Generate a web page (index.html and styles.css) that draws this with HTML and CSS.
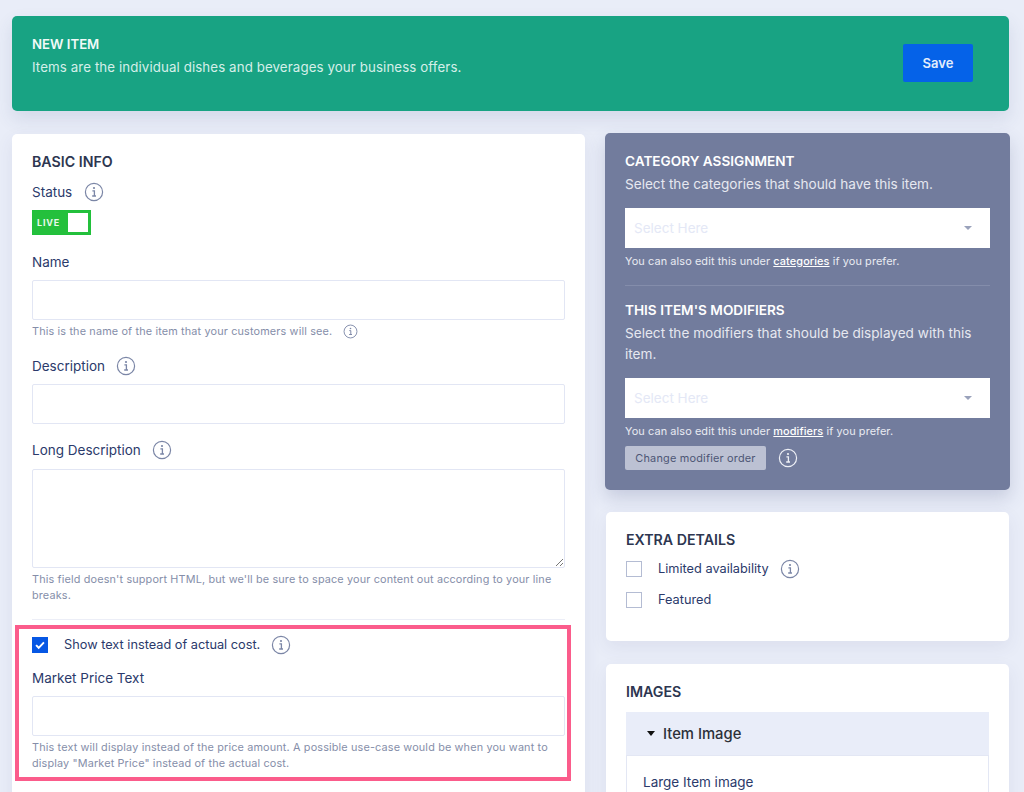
FILE: index.html
```html
<!DOCTYPE html>
<html lang="en">
<head>
<meta charset="utf-8">
<title>New Item</title>
<link rel="stylesheet" href="styles.css">
</head>
<body>
<svg class="sprite" width="0" height="0" aria-hidden="true">
  <symbol id="info" viewBox="0 0 20 20">
    <circle cx="10" cy="10" r="8.6" fill="none" stroke="currentColor" stroke-width="1.2"/>
    <path d="M8.4 8.8h2v5M8.2 14h3.8" fill="none" stroke="currentColor" stroke-width="1.3"/>
    <circle cx="10" cy="6" r="1.1" fill="currentColor"/>
  </symbol>
</svg>
<main class="page">
  <header class="banner">
    <div>
      <h1 class="banner-title">NEW ITEM</h1>
      <p class="banner-text">Items are the individual dishes and beverages your business offers.</p>
    </div>
    <button class="save" type="button">Save</button>
  </header>
  <div class="columns">
    <section class="card left">
      <h2 class="title">BASIC INFO</h2>
      <div class="label-row status-row"><span class="label">Status</span><svg class="info"><use href="#info"/></svg></div>
      <div class="switch"><span class="switch-text">LIVE</span><span class="knob"></span></div>
      <div class="label-row name-row"><span class="label">Name</span></div>
      <div class="input"></div>
      <div class="help help-row">This is the name of the item that your customers will see.<svg class="info small"><use href="#info"/></svg></div>
      <div class="label-row desc-row"><span class="label">Description</span><svg class="info"><use href="#info"/></svg></div>
      <div class="input"></div>
      <div class="label-row long-row"><span class="label">Long Description</span><svg class="info"><use href="#info"/></svg></div>
      <div class="input textarea">
        <svg class="grip" viewBox="0 0 10 10"><path d="M9 2L2 9M9 6L6 9" stroke="#777" fill="none"/></svg>
      </div>
      <p class="help help-long">This field doesn't support HTML, but we'll be sure to space your content out according to your line breaks.</p>
      <hr class="rule">
      <div class="marked">
        <div class="check-row">
          <span class="box checked"><svg viewBox="0 0 16 16"><path d="M3.5 8.2l3 3 6-6.2" fill="none" stroke="#fff" stroke-width="2.2"/></svg></span>
          <span class="label check-label">Show text instead of actual cost.</span>
          <svg class="info"><use href="#info"/></svg>
        </div>
        <div class="label-row price-row"><span class="label">Market Price Text</span></div>
        <div class="input"></div>
        <p class="help help-long">This text will display instead of the price amount. A possible use-case would be when you want to display "Market Price" instead of the actual cost.</p>
        <div class="highlight"></div>
      </div>
    </section>
    <div class="right">
      <section class="card dark">
        <h2 class="title light">CATEGORY ASSIGNMENT</h2>
        <p class="lead">Select the categories that should have this item.</p>
        <div class="select"><span>Select Here</span><i class="caret"></i></div>
        <p class="note">You can also edit this under <a href="#">categories</a> if you prefer.</p>
        <hr class="dark-rule">
        <h2 class="title light">THIS ITEM'S MODIFIERS</h2>
        <p class="lead">Select the modifiers that should be displayed with this item.</p>
        <div class="select"><span>Select Here</span><i class="caret"></i></div>
        <p class="note">You can also edit this under <a href="#">modifiers</a> if you prefer.</p>
        <div class="order-row">
          <button class="order" type="button">Change modifier order</button>
          <svg class="info white"><use href="#info"/></svg>
        </div>
      </section>
      <section class="card extra">
        <h2 class="title">EXTRA DETAILS</h2>
        <div class="check-row"><span class="box"></span><span class="label check-label">Limited availability</span><svg class="info"><use href="#info"/></svg></div>
        <div class="check-row"><span class="box"></span><span class="label check-label">Featured</span></div>
      </section>
      <section class="card images">
        <h2 class="title">IMAGES</h2>
        <div class="acc-head"><i class="acc-caret"></i>Item Image</div>
        <div class="acc-body"><span class="label">Large Item image</span></div>
      </section>
    </div>
  </div>
</main>
</body>
</html>
```
FILE: styles.css
```css
* { box-sizing: border-box; }
html, body { margin: 0; height: 792px; overflow: hidden; }
body {
  background: #e9edf8;
  font-family: Inter, "Liberation Sans", sans-serif;
  color: #2b3a6b;
}
.sprite { position: absolute; }
.page { height: 792px; overflow: hidden; padding: 16px 14px 0 12px; }

.banner {
  height: 95px;
  margin-right: 1px;
  background: #18a383;
  border-radius: 5px;
  box-shadow: 0 8px 18px rgba(60, 70, 120, .12);
  padding: 20px 36px 0 20px;
  display: flex;
  justify-content: space-between;
  align-items: flex-start;
}
.banner-title { margin: 0; font-size: 13.2px; line-height: 16px; font-weight: 600; color: #f2faf8; }
.banner-text { margin: 5px 0 0; font-size: 13.3px; line-height: 20px; color: #d5efe9; letter-spacing: .1px; }
.save {
  width: 70px; height: 38px; margin-top: 8px;
  border: 0; border-radius: 2px;
  background: #0562e8; color: #e3edfc;
  font: 600 13px Inter, "Liberation Sans", sans-serif;
}

.columns { display: flex; align-items: flex-start; gap: 20.5px; margin-top: 23px; }
.card { background: #fff; border-radius: 5px; box-shadow: 0 6px 18px rgba(60, 70, 120, .08); }
.left { width: 572.5px; height: 800px; padding: 20px 20px 0; flex: none; }
.right { width: 405px; flex: none; margin-top: -1px; display: flex; flex-direction: column; }

.title { margin: 0; font-size: 14.2px; line-height: 16px; font-weight: 600; color: #2d3650; }
.title.light { font-size: 13.6px; color: #fff; }
.label { font-size: 13.5px; line-height: 18px; color: #2b3a6b; }
.check-label { font-size: 12.75px; }
.label-row { display: flex; align-items: center; gap: 11px; height: 20px; }
.info { width: 20px; height: 20px; color: #7b86a6; flex: none; }
.info.small { width: 15px; height: 15px; margin-left: 11px; }
.info.white { color: #eef0f6; }
.status-row { margin-top: 12px; gap: 12px; }
.switch {
  width: 59px; height: 25px; margin-top: 8px;
  background: #24c03c; border: 1px solid #20c03a;
  position: relative;
  display: flex; align-items: center;
  padding-left: 4px;
}
.switch-text { font-size: 9px; font-weight: 700; letter-spacing: .8px; color: #e8f9eb; }
.knob { position: absolute; top: 2px; right: 2px; width: 20px; height: 19px; background: #fff; }
.name-row { margin-top: 17px; }
.input { height: 40px; margin-top: 8px; border: 1px solid #e2e6f4; border-radius: 2px; background: #fff; }
.help { font-size: 10.85px; line-height: 16px; color: #858ea9; letter-spacing: .15px; margin: 0; }
.help-row { display: flex; align-items: center; margin-top: 3px; height: 16px; }
.desc-row { margin-top: 17px; }
.long-row { margin-top: 16px; }
.textarea { height: 99px; margin-top: 9px; position: relative; }
.grip { position: absolute; right: 0; bottom: 0; width: 10px; height: 10px; }
.help-long { margin-top: 3px; }
.rule { border: 0; border-top: 1px solid #eceef7; margin: 16px 0 0; }

.marked { position: relative; padding-top: 15px; }
.check-row { display: flex; align-items: center; height: 20px; }
.box {
  width: 16px; height: 16px; flex: none; margin-right: 16px;
  border: 1px solid #b4bcd3; background: #fff;
}
.box.checked { background: #0657e4; border-color: #0657e4; }
.box svg { display: block; width: 14px; height: 14px; }
.check-row .info { margin-left: 11px; }
.price-row { margin-top: 13px; }
.highlight {
  position: absolute;
  left: -17px; top: 5px;
  width: 556px; height: 156px;
  border: 4px solid #fb5c8b;
  pointer-events: none;
}

.dark { background: #727c9d; padding: 20px; height: 357px; box-shadow: 0 8px 18px rgba(60, 70, 120, .2); }
.lead { margin: 5px 0 0; font-size: 13.6px; line-height: 21px; color: #e6e8f0; }
.select {
  height: 40px; margin-top: 13px; background: #fff;
  display: flex; align-items: center; justify-content: space-between;
  padding: 0 18px 0 9px;
  font-size: 13.5px; color: #e4e8f6;
}
.caret { width: 0; height: 0; border: 4px solid transparent; border-top: 4px solid #9aa2bb; border-bottom: 0; }
.note { margin: 5px 0 0; font-size: 10.9px; line-height: 16px; color: #e9ebf2; letter-spacing: .1px; }
.note a { color: #fff; font-weight: 500; }
.dark-rule { border: 0; border-top: 1px solid #848dab; margin: 16px 0 16px; }
.order-row { display: flex; align-items: center; gap: 12px; margin-top: 7px; }
.order {
  width: 141px; height: 24px; border: 0; border-radius: 2px;
  background: #bcc1d3; color: #4d5675;
  font: 10.9px Inter, "Liberation Sans", sans-serif; letter-spacing: .2px;
}

.extra { width: 403px; margin: 22px 0 0 1px; height: 129px; padding: 20px 20px 0; }
.extra .check-row { margin-top: 11px; }
.extra .check-row:first-of-type { margin-top: 11px; }
.images { width: 403px; margin: 23px 0 0 1px; height: 200px; padding: 20px 20px 0; }
.acc-head {
  height: 43px; margin-top: 12px;
  background: #e9edf9;
  display: flex; align-items: center;
  padding-left: 21px;
  font-size: 14.8px; font-weight: 500; color: #2c3038;
}
.acc-caret { width: 0; height: 0; margin-right: 8px; border: 4px solid transparent; border-top: 5px solid #111; border-bottom: 0; }
.acc-body { border: 1px solid #e3e7f4; padding: 15px 16px 40px; }
```
